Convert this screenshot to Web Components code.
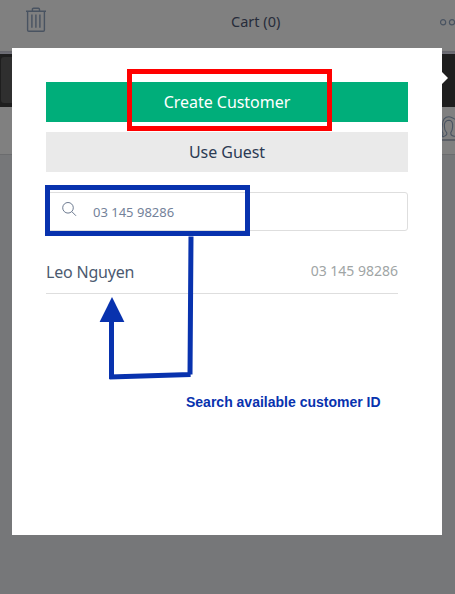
<!DOCTYPE html>
<html lang="en">
<head>
<meta charset="utf-8">
<title>Select customer</title>
<style>
body{margin:0;width:455px;height:594px;overflow:hidden;background:#767779;font-family:"Noto Sans","Open Sans",sans-serif}
</style>
</head>
<body>
<pos-page></pos-page>
<script>
function define(name, html) {
  const template = document.createElement('template');
  template.innerHTML = html;
  customElements.define(name, class extends HTMLElement {
    constructor() {
      super();
      this.attachShadow({mode: 'open'}).append(template.content.cloneNode(true));
    }
  });
}

define('trash-icon', `<style>:host{display:block;width:20px;height:26px}svg{display:block}</style>
<svg width="20" height="26" viewBox="0 0 20 26" fill="none" stroke="#495361" stroke-width="1.4">
<path d="M0 4.2H20M6.4 4V2.4Q6.4 1.3 7.5 1.3H12.4Q13.5 1.3 13.5 2.4V4M1.6 4.5V23Q1.6 24.2 2.8 24.2H17.2Q18.4 24.2 18.4 23V4.5M5.9 7.5V20.8M9.9 7.5V20.8M13.9 7.5V20.8"/></svg>`);

define('more-icon', `<style>:host{display:block;width:15px;height:8px}svg{display:block}</style>
<svg width="15" height="8" viewBox="0 0 15 8" fill="none" stroke="#495361" stroke-width="1.2"><circle cx="3.1" cy="4.3" r="2.6"/><circle cx="12" cy="4.3" r="2.6"/></svg>`);

define('search-icon', `<style>:host{display:block;width:15px;height:15px}svg{display:block}</style>
<svg width="15" height="15" viewBox="0 0 15 15" fill="none" stroke="#6d7b91" stroke-width="1"><circle cx="6" cy="5.8" r="5.3"/><path d="M9.8 9.6L14 13.8"/></svg>`);

define('person-icon', `<style>:host{display:block;width:14px;height:24px}svg{display:block}</style>
<svg width="14" height="24" viewBox="0 0 14 24" fill="none" stroke="#495361" stroke-width="1.1">
<path d="M0 20.2Q2.6 19.3 1.7 16.8C.6 14.5 1.1 13.4 1.3 9.7C1.3 3.5 4 .8 8 .8C10.5 .8 12 2.2 14 3.2"/>
<path d="M0 20.6H2.5Q6.4 19 5.8 16.8Q3.3 14.6 3.4 10.6V8.3Q4.2 4.4 8 4.3Q11.2 4.4 11.6 8.3V11Q11.4 14.8 9.8 16.7Q9.5 19.5 13 20.3H14"/></svg>`);

define('top-bar', `<style>
:host{display:grid;grid-template-columns:56px 1fr 15px;align-items:start;box-sizing:border-box;height:51px;background:#808080;color:#272c3a}
trash-icon{margin:7px 0 0 26px}
span{font-size:14.5px;line-height:20px;margin:11px 0 0 175px;white-space:nowrap}
more-icon{margin-top:18px}
</style><trash-icon></trash-icon><span><slot></slot></span><more-icon></more-icon>`);

define('pos-background', `<style>
:host{display:flex;flex-direction:column;height:594px}
.shade{height:3px;background:linear-gradient(#65656b,#707078)}
.tabs{height:53px;background:#1e1e1e;display:flex;justify-content:space-between;align-items:center}
.tab{width:40px;height:46px;margin-left:1px;margin-top:-1px;background:#2f2f2f;border-radius:3px}
.notch{width:6px;height:12px;margin-right:7px;margin-top:-5px;background:#fff;clip-path:polygon(0 0,100% 50%,0 100%)}
.strip{height:47px;background:#808080;border-bottom:1px solid #6b6c6e;display:flex;justify-content:flex-end}
.customer{width:15px;height:32px;border-bottom:2px solid #5b5f66;display:flex;align-items:flex-end}
person-icon{margin:0 0 -1px 1px}
</style>
<top-bar>Cart (0)</top-bar><div class="shade"></div>
<div class="tabs"><div class="tab"></div><div class="notch"></div></div>
<div class="strip"><div class="customer"><person-icon></person-icon></div></div>`);

define('action-button', `<style>
:host{display:flex;justify-content:center;height:40px;font-size:16px;line-height:40px;background:#eaeaea;color:#2c3b54}
:host([primary]){background:#00ae7a;color:#fff}
span{letter-spacing:-.04px}
</style><span><slot></slot></span>`);

define('search-field', `<style>
:host{display:flex;align-items:center;box-sizing:border-box;height:39px;border:1px solid #dedede;border-radius:3px;padding-left:15px;color:#74829a;font-size:13px;line-height:20px}
search-icon{margin:-4px 16px 0 0}
span{margin-top:1px}
</style><search-icon></search-icon><span><slot></slot></span>`);

define('customer-row', `<style>
:host{display:flex;justify-content:space-between;align-items:center;box-sizing:border-box;height:43px;border-bottom:1px solid #dedede;color:#4b5a70;font-size:16px;line-height:22px}
.name{letter-spacing:-.2px}
.phone{font-size:14px;color:#a0a5a5;margin-top:-2px}
</style><span class="name"><slot></slot></span><span class="phone"><slot name="phone"></slot></span>`);

define('customer-dialog', `<style>
:host{box-sizing:border-box;width:430px;height:487px;background:#fff;padding:34px 34px 0;display:flex;flex-direction:column}
action-button + action-button{margin-top:10px}
search-field{margin-top:20px}
customer-row{margin:20px 10px 0 0}
</style>
<action-button primary>Create Customer</action-button>
<action-button>Use Guest</action-button>
<search-field>03 145 98286</search-field>
<customer-row>Leo Nguyen<span slot="phone">03 145 98286</span></customer-row>`);

define('callout-layer', `<style>
:host{display:block;position:absolute;inset:0;pointer-events:none}
.frame{position:absolute;box-sizing:border-box;border:5px solid}
.red{left:127px;top:69px;width:205px;height:62px;border-color:#f00}
.blue{left:45px;top:185px;width:205px;height:51px;border-color:#0832ae}
svg{position:absolute;inset:0}
.note{position:absolute;left:186px;top:393px;font:bold 14px/18px "Liberation Sans",Arial,sans-serif;color:#0832ae;white-space:nowrap}
</style>
<div class="frame red"></div><div class="frame blue"></div>
<svg width="455" height="594" fill="none" stroke="#0832ae" stroke-width="5">
<path d="M191 236.5L190 374.5M190.6 374.6L109.5 377M111.5 379V320"/><path d="M112 297L124.4 322H99.6Z" fill="#0832ae" stroke="none"/></svg>
<div class="note"><slot></slot></div>`);

define('pos-page', `<style>
:host{display:grid;position:relative;width:455px;height:594px;overflow:hidden}
pos-background,customer-dialog{grid-area:1/1}
customer-dialog{margin:48px 0 0 12px;z-index:1}
callout-layer{z-index:2}
</style>
<pos-background></pos-background><customer-dialog></customer-dialog>
<callout-layer>Search available customer ID</callout-layer>`);
</script>
</body>
</html>
